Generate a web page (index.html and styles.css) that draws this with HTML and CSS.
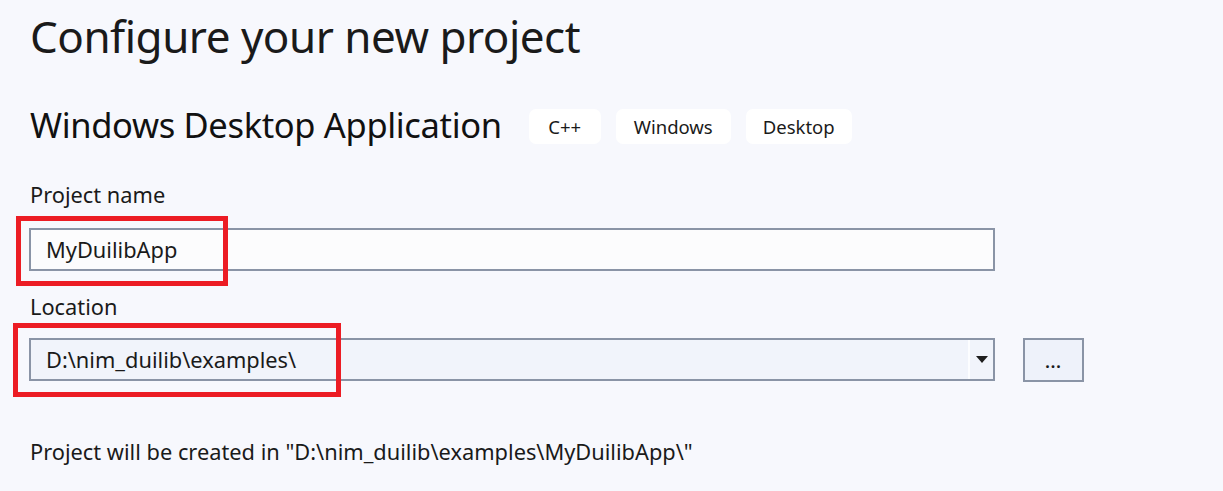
FILE: index.html
```html
<!DOCTYPE html>
<html>
<head>
<meta charset="utf-8">
<link rel="stylesheet" href="styles.css">
</head>
<body>
<div class="page">
  <h1 class="title">Configure your new project</h1>
  <div class="template-row">
    <h2 class="template-name">Windows Desktop Application</h2>
    <div class="tags">
      <span class="tag tag-cpp">C++</span>
      <span class="tag tag-win">Windows</span>
      <span class="tag tag-desk">Desktop</span>
    </div>
  </div>
  <div class="label label-name">Project name</div>
  <div class="field-row name-row">
    <div class="input input-name">MyDuilibApp</div>
    <div class="mark mark-name"></div>
  </div>
  <div class="label label-loc">Location</div>
  <div class="field-row loc-row">
    <div class="combo">
      <div class="combo-text">D:\nim_duilib\examples\</div>
      <div class="combo-btn">
        <svg width="12" height="7" viewBox="0 0 12 7"><path d="M0 0H12L6 7Z" fill="#1e1e1e"/></svg>
      </div>
    </div>
    <div class="browse">...</div>
    <div class="mark mark-loc"></div>
  </div>
  <div class="result">Project will be created in "D:\nim_duilib\examples\MyDuilibApp\"</div>
</div>
</body>
</html>
```
FILE: styles.css
```css
html, body {
  margin: 0;
  padding: 0;
  background: #f7f8fd;
}
body {
  font-family: "Noto Sans", "Open Sans", sans-serif;
  color: #1a1a1a;
}
.page {
  padding: 0 0 0 30px;
  width: 1193px;
  height: 491px;
  box-sizing: border-box;
}
.title {
  margin: 0;
  padding-top: 6px;
  font-size: 44px;
  font-weight: 400;
  line-height: 60px;
  height: 60px;
  letter-spacing: -0.5px;
}
.template-row {
  display: flex;
  align-items: flex-start;
  margin-top: 37px;
  height: 44px;
}
.template-name {
  margin: 0;
  font-size: 34.5px;
  font-weight: 400;
  line-height: 44px;
  letter-spacing: -0.35px;
  color: #111;
}
.tags {
  display: flex;
  gap: 15px;
  margin-left: 27px;
  margin-top: 6px;
}
.tag {
  background: #fff;
  border-radius: 7px;
  height: 35px;
  line-height: 35px;
  font-size: 18.5px;
  text-align: center;
  color: #1a1a1a;
}
.tag-cpp { width: 72px; }
.tag-win { width: 115px; }
.tag-desk { width: 106px; }
.label {
  font-size: 21.8px;
  line-height: 28px;
  height: 28px;
}
.label-name { margin-top: 34px; }
.label-loc { margin-top: 22px; }
.field-row {
  position: relative;
  display: flex;
  margin-left: -1px;
}
.name-row { margin-top: 19px; }
.input {
  box-sizing: border-box;
  width: 966px;
  height: 43px;
  border: 2px solid #8a94a6;
  background: #fcfcfd;
  font-size: 21.8px;
  line-height: 39px;
  padding-left: 15px;
}
.loc-row { margin-top: 17px; gap: 28px; }
.combo {
  box-sizing: border-box;
  width: 966px;
  height: 43px;
  border: 2px solid #8a94a6;
  background: #f1f4fb;
  display: flex;
}
.combo-text {
  flex: 1;
  font-size: 21.8px;
  line-height: 39px;
  padding-left: 15px;
}
.combo-btn {
  width: 23px;
  border-left: 2px solid #fcfdff;
  display: flex;
  align-items: center;
  justify-content: center;
}
.browse {
  box-sizing: border-box;
  width: 61px;
  height: 44px;
  border: 2px solid #8a94a6;
  background: #eef2fa;
  font-size: 16px;
  line-height: 44px;
  text-align: center;
  font-weight: 700;
  letter-spacing: 1px;
}
.mark {
  position: absolute;
  border: 5px solid #ec1c24;
  box-sizing: border-box;
  pointer-events: none;
}
.mark-name {
  left: -13px;
  top: -12px;
  width: 212px;
  height: 70px;
}
.mark-loc {
  left: -16px;
  top: -15px;
  width: 328px;
  height: 74px;
}
.result {
  margin-top: 56px;
  font-size: 21.8px;
  line-height: 28px;
}
```
